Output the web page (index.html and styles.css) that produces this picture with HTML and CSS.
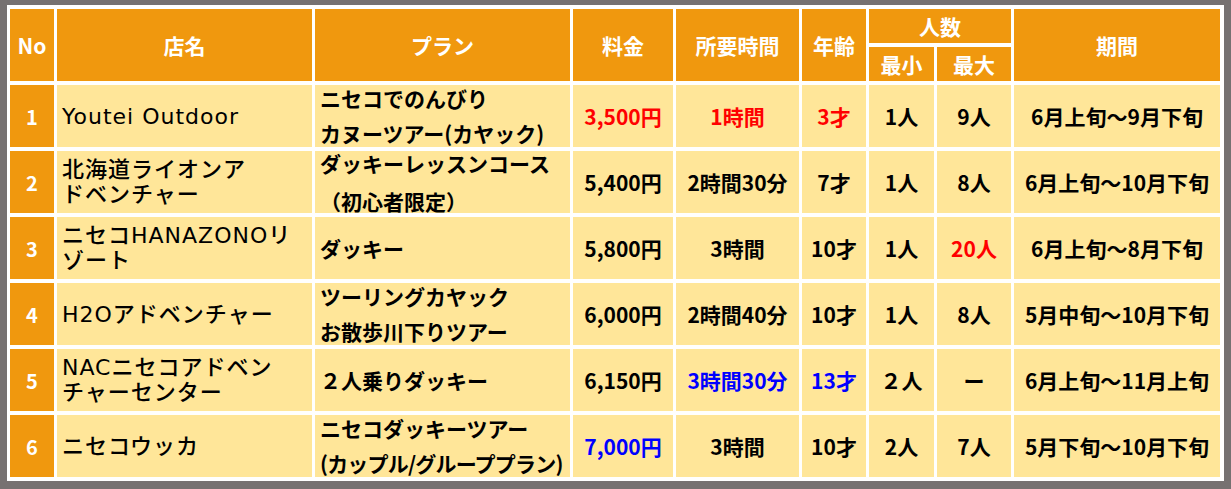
FILE: index.html
```html
<!DOCTYPE html>
<html lang="ja">
<head>
<meta charset="utf-8">
<title>ダッキー・カヤックツアー比較</title>
<link rel="stylesheet" href="styles.css">
</head>
<body>
<div class="table">
  <div class="h rs2">No</div>
  <div class="h rs2">店名</div>
  <div class="h rs2">プラン</div>
  <div class="h rs2">料金</div>
  <div class="h rs2">所要時間</div>
  <div class="h rs2">年齢</div>
  <div class="h cs2">人数</div>
  <div class="h rs2">期間</div>
  <div class="h">最小</div>
  <div class="h">最大</div>

  <div class="no">1</div>
  <div class="c name"><span>Youtei Outdoor</span></div>
  <div class="c plan"><span>ニセコでのんびり<br>カヌーツアー(カヤック)</span></div>
  <div class="c red">3,500円</div>
  <div class="c red">1時間</div>
  <div class="c red">3才</div>
  <div class="c">1人</div>
  <div class="c">9人</div>
  <div class="c">6月上旬～9月下旬</div>

  <div class="no">2</div>
  <div class="c name"><span>北海道ライオンア<br>ドベンチャー</span></div>
  <div class="c plan plan-wide"><span>ダッキーレッスンコース<br>（初心者限定）</span></div>
  <div class="c">5,400円</div>
  <div class="c">2時間30分</div>
  <div class="c">7才</div>
  <div class="c">1人</div>
  <div class="c">8人</div>
  <div class="c">6月上旬～10月下旬</div>

  <div class="no">3</div>
  <div class="c name"><span>ニセコHANAZONOリ<br>ゾート</span></div>
  <div class="c plan"><span>ダッキー</span></div>
  <div class="c">5,800円</div>
  <div class="c">3時間</div>
  <div class="c">10才</div>
  <div class="c">1人</div>
  <div class="c red">20人</div>
  <div class="c">6月上旬～8月下旬</div>

  <div class="no">4</div>
  <div class="c name"><span>H2Oアドベンチャー</span></div>
  <div class="c plan"><span>ツーリングカヤック<br>お散歩川下りツアー</span></div>
  <div class="c">6,000円</div>
  <div class="c">2時間40分</div>
  <div class="c">10才</div>
  <div class="c">1人</div>
  <div class="c">8人</div>
  <div class="c">5月中旬～10月下旬</div>

  <div class="no">5</div>
  <div class="c name"><span>NACニセコアドベン<br>チャーセンター</span></div>
  <div class="c plan"><span>２人乗りダッキー</span></div>
  <div class="c">6,150円</div>
  <div class="c blue">3時間30分</div>
  <div class="c blue">13才</div>
  <div class="c">２人</div>
  <div class="c">ー</div>
  <div class="c">6月上旬～11月上旬</div>

  <div class="no">6</div>
  <div class="c name"><span>ニセコウッカ</span></div>
  <div class="c plan"><span>ニセコダッキーツアー<br><span class="tight">(カップル/グループプラン)</span></span></div>
  <div class="c blue">7,000円</div>
  <div class="c">3時間</div>
  <div class="c">10才</div>
  <div class="c">2人</div>
  <div class="c">7人</div>
  <div class="c">5月下旬～10月下旬</div>
</div>
</body>
</html>
```
FILE: styles.css
```css
html, body {
  margin: 0;
  padding: 0;
}
body {
  background: #767171;
  width: 1231px;
  height: 489px;
  overflow: hidden;
  padding-top: 5px;
  padding-left: 7px;
  box-sizing: border-box;
  font-family: "Noto Sans CJK JP", "Noto Sans", sans-serif;
}
.table {
  width: 1217px;
  height: 476px;
  box-sizing: border-box;
  background: #ffffff;
  padding: 4px 3px;
  display: grid;
  grid-template-columns: 44px 255px 255px 100px 123px 64px 65px 74px 206px;
  grid-template-rows: 34px 34px repeat(6, 62px);
  column-gap: 3px;
  row-gap: 4px;
}
.h, .no, .c {
  display: flex;
  align-items: center;
  justify-content: center;
  font-weight: 700;
  font-size: 21px;
  white-space: nowrap;
}
.h {
  background: #f0980e;
  color: #ffffff;
}
.rs2 { grid-row: span 2; }
.cs2 { grid-column: span 2; }
.no {
  background: #f0980e;
  color: #ffffff;
  font-size: 20px;
}
.c {
  background: #ffe699;
  color: #000000;
}
.name {
  justify-content: flex-start;
  padding-left: 5px;
  font-family: "DejaVu Sans", "Noto Sans CJK JP", sans-serif;
  font-weight: 500;
  font-size: 22px;
  letter-spacing: 1px;
  line-height: 25px;
}
.name span, .plan > span { display: block; }
.plan {
  justify-content: flex-start;
  padding-left: 5px;
  line-height: 35px;
}
.plan-wide { line-height: 38px; }
.tight { letter-spacing: -0.8px; }
.red { color: #ff0000; }
.blue { color: #0000ff; }
```
